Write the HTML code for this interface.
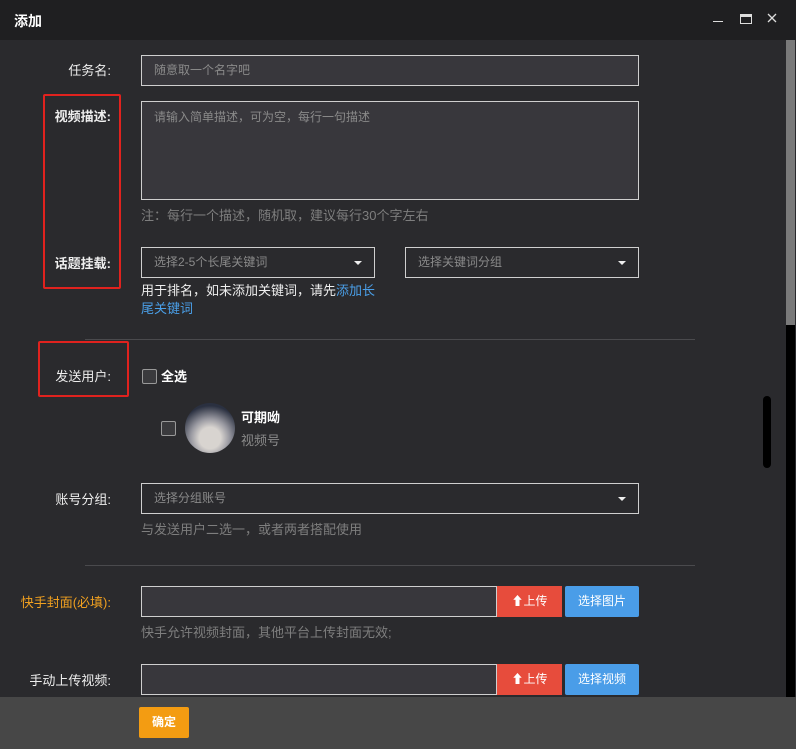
<!DOCTYPE html>
<html><head><meta charset="utf-8"><style>
*{margin:0;padding:0;box-sizing:border-box}
body{width:796px;height:749px;overflow:hidden;background:#2a2a2d;font-family:"Liberation Sans","Noto Sans CJK SC",sans-serif;font-size:13px;color:#e8e8e8;position:relative}
.a{position:absolute}
.title{left:0;top:0;width:796px;height:40px;background:#1f1f21}
.lbl{right:685px;text-align:right;white-space:nowrap;color:#eee}
.inp{border:1px solid #cfcfcf;background:#38373c;color:#8a8a8a;padding-left:12px;line-height:28px;font-size:12px}
.sel{border:1px solid #cfcfcf;background:#2a2a2d;color:#8a8a8a;padding-left:12px;line-height:28px;font-size:12px}
.sel:after{content:"";position:absolute;right:12px;top:13px;border-left:4px solid transparent;border-right:4px solid transparent;border-top:4px solid #eee}
.help{color:#7e7e7e;font-size:13px}
.cb{width:15px;height:15px;border:1px solid #999;border-radius:2px;background:#3a3a3d}
.btn{color:#fff;text-align:center;line-height:30px;font-size:12px}
</style></head><body>
<div class="a title"></div>
<div class="a" style="left:14px;top:11px;font-size:14px;font-weight:bold;color:#fff">添加</div>
<div class="a" style="left:713px;top:21px;width:10px;height:1px;background:#ddd"></div>
<div class="a" style="left:740px;top:14px;width:12px;height:10px;border:1px solid #ddd;border-top-width:3px"></div>
<svg class="a" style="left:767px;top:13px" width="10" height="10"><path d="M1 1L9 9M9 1L1 9" stroke="#ddd" stroke-width="1.3"/></svg>
<div class="a" style="left:786px;top:40px;width:9px;height:285px;background:#7a7a7a"></div>
<div class="a" style="left:786px;top:325px;width:9px;height:372px;background:#000"></div>
<div class="a" style="left:763px;top:396px;width:8px;height:72px;background:#000;border-radius:4px"></div>

<div class="a lbl" style="top:60px">任务名:</div>
<div class="a inp" style="left:141px;top:55px;width:498px;height:31px">随意取一个名字吧</div>

<div class="a" style="left:43px;top:94px;width:78px;height:195px;border:2px solid #e0221e;border-radius:2px"></div>
<div class="a lbl" style="top:106px;font-weight:bold">视频描述:</div>
<div class="a inp" style="left:141px;top:101px;width:498px;height:99px;line-height:30px">请输入简单描述，可为空，每行一句描述</div>
<div class="a help" style="left:141px;top:205px">注：每行一个描述，随机取，建议每行30个字左右</div>
<div class="a lbl" style="top:253px;font-weight:bold">话题挂载:</div>
<div class="a sel" style="left:141px;top:247px;width:234px;height:31px">选择2-5个长尾关键词</div>
<div class="a sel" style="left:405px;top:247px;width:234px;height:31px">选择关键词分组</div>
<div class="a" style="left:141px;top:282px;width:240px;line-height:18px;color:#eee">用于排名，如未添加关键词，请先<span style="color:#4a9fe8">添加长尾关键词</span></div>
<div class="a" style="left:85px;top:339px;width:610px;height:1px;background:#4a4a4d"></div>

<div class="a" style="left:38px;top:341px;width:91px;height:56px;border:2px solid #e0221e;border-radius:2px"></div>
<div class="a lbl" style="top:366px">发送用户:</div>
<div class="a cb" style="left:142px;top:369px"></div>
<div class="a" style="left:161px;top:366px;font-weight:bold;color:#fff">全选</div>
<div class="a cb" style="left:161px;top:421px"></div>
<div class="a" style="left:185px;top:403px;width:50px;height:50px;border-radius:50%;background:radial-gradient(circle at 50% 70%,#d8d4d0 0 25%,#9898a0 45%,#2a3040 75%)"></div>
<div class="a" style="left:241px;top:407px;font-weight:bold;color:#fff">可期呦</div>
<div class="a" style="left:241px;top:430px;color:#8a8a8a">视频号</div>

<div class="a lbl" style="top:489px">账号分组:</div>
<div class="a sel" style="left:141px;top:483px;width:498px;height:31px">选择分组账号</div>
<div class="a help" style="left:141px;top:519px">与发送用户二选一，或者两者搭配使用</div>
<div class="a" style="left:85px;top:565px;width:610px;height:1px;background:#4a4a4d"></div>

<div class="a lbl" style="top:592px;color:#f0a020">快手封面(必填):</div>
<div class="a inp" style="left:141px;top:586px;width:356px;height:31px"></div>
<div class="a btn" style="left:497px;top:586px;width:65px;height:31px;background:#e74c3c">⬆上传</div>
<div class="a btn" style="left:565px;top:586px;width:74px;height:31px;background:#4a9de8;border-radius:2px">选择图片</div>
<div class="a help" style="left:141px;top:622px">快手允许视频封面，其他平台上传封面无效;</div>

<div class="a lbl" style="top:670px">手动上传视频:</div>
<div class="a inp" style="left:141px;top:664px;width:356px;height:31px"></div>
<div class="a btn" style="left:497px;top:664px;width:65px;height:31px;background:#e74c3c">⬆上传</div>
<div class="a btn" style="left:565px;top:664px;width:74px;height:31px;background:#4a9de8;border-radius:2px">选择视频</div>

<div class="a" style="left:0;top:697px;width:796px;height:52px;background:#474747"></div>
<div class="a btn" style="left:139px;top:707px;width:50px;height:31px;background:#f39c12;border-radius:2px;font-weight:bold">确定</div>
</body></html>
